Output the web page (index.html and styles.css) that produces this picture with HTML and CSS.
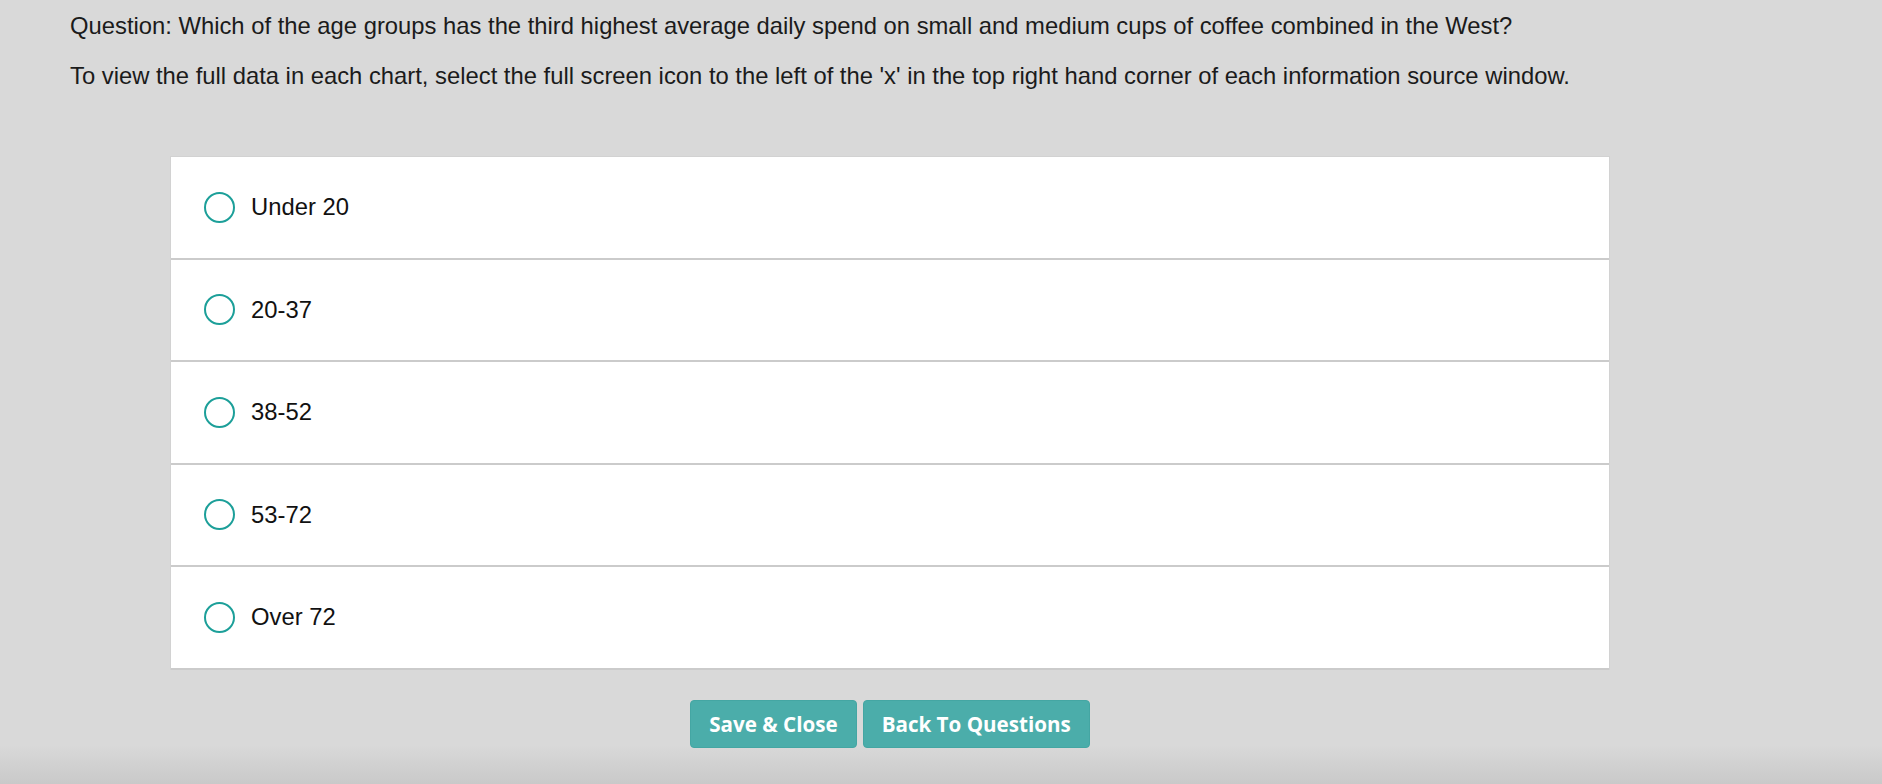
FILE: index.html
```html
<!DOCTYPE html>
<html lang="en">
<head>
    <meta charset="UTF-8">
    <meta name="viewport" content="width=device-width, initial-scale=1.0">
    <title>Question</title>
    <link rel="stylesheet" href="styles.css">
</head>
<body>
    <div class="question">
        <p>Question: Which of the age groups has the third highest average daily spend on small and medium cups of coffee combined in the West?</p>
        <p>To view the full data in each chart, select the full screen icon to the left of the 'x' in the top right hand corner of each information source window.</p>
    </div>

    <div class="answers">
        <label class="option"><input type="radio" name="age"><span class="radio"></span><span class="label">Under 20</span></label>
        <label class="option"><input type="radio" name="age"><span class="radio"></span><span class="label">20-37</span></label>
        <label class="option"><input type="radio" name="age"><span class="radio"></span><span class="label">38-52</span></label>
        <label class="option"><input type="radio" name="age"><span class="radio"></span><span class="label">53-72</span></label>
        <label class="option"><input type="radio" name="age"><span class="radio"></span><span class="label">Over 72</span></label>
    </div>

    <div class="actions">
        <button class="btn">Save &amp; Close</button>
        <button class="btn">Back To Questions</button>
    </div>
</body>
</html>
```

FILE: styles.css
```css
html {
    height: 100%;
}
body {
    margin: 0;
    min-height: 100%;
    font-family: "Liberation Sans", Arial, sans-serif;
    color: #1b1b1b;
    background: linear-gradient(to bottom, #d9d9d9 0, #d9d9d9 745px, #c9c9c9 784px);
}
.question {
    padding: 12px 0 0 70px;
}
.question p {
    margin: 0 0 22px 0;
    font-size: 23.8px;
    line-height: 28px;
}
.question p:last-child {
    margin-bottom: 0;
}
.answers {
    width: 1438px;
    margin: 66px 0 0 170px;
    background-color: #fff;
    border: 1px solid #d2d2d2;
    border-bottom: none;
}
.option {
    display: flex;
    align-items: center;
    height: 100.5px;
    padding-left: 33px;
    border-bottom: 2px solid #cbcbcb;
    cursor: pointer;
}
.option input {
    display: none;
}
.radio {
    width: 27px;
    height: 27px;
    border: 2.5px solid #1c9f99;
    border-radius: 50%;
    margin-right: 16px;
}
.label {
    font-size: 23.8px;
    color: #111;
}
.actions {
    display: flex;
    justify-content: center;
    gap: 6px;
    width: 1440px;
    margin: 30px 0 0 170px;
}
.btn {
    height: 48px;
    padding: 0 18px;
    border: 1px solid #44a6a3;
    border-radius: 4px;
    background-color: #4badaa;
    color: #fff;
    font-family: "Open Sans", sans-serif;
    font-weight: 700;
    font-size: 20.6px;
    cursor: pointer;
}
```
